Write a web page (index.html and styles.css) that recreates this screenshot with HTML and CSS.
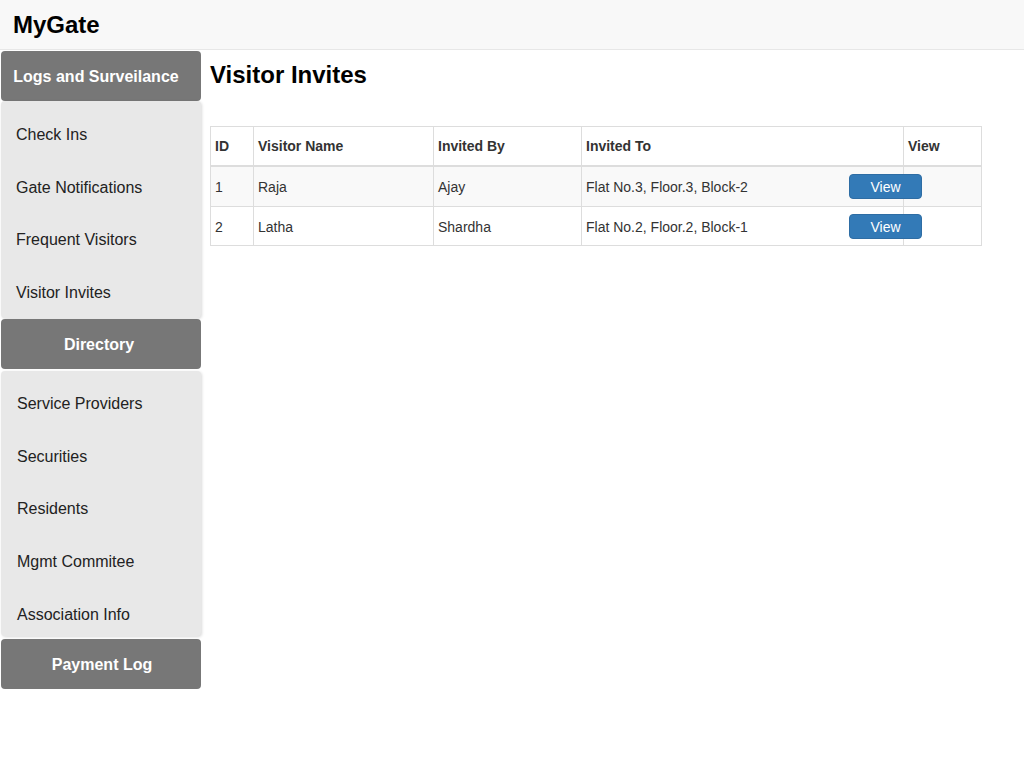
FILE: index.html
```html
<!DOCTYPE html>
<html>
<head>
<meta charset="utf-8">
<title>MyGate</title>
<link rel="stylesheet" href="styles.css">
</head>
<body>
<header class="topbar">
  <span class="brand">MyGate</span>
</header>
<div class="layout">
  <nav class="sidebar">
    <div class="menu-head menu-head-first">Logs and Surveilance</div>
    <ul class="menu-box menu-box-first">
      <li>Check Ins</li>
      <li>Gate Notifications</li>
      <li>Frequent Visitors</li>
      <li>Visitor Invites</li>
    </ul>
    <div class="menu-head">Directory</div>
    <ul class="menu-box menu-box-second">
      <li>Service Providers</li>
      <li>Securities</li>
      <li>Residents</li>
      <li>Mgmt Commitee</li>
      <li>Association Info</li>
    </ul>
    <div class="menu-head menu-head-last">Payment Log</div>
  </nav>
  <main class="content">
    <h1 class="title">Visitor Invites</h1>
    <table class="grid">
      <colgroup>
        <col class="c-id">
        <col class="c-name">
        <col class="c-by">
        <col class="c-to">
        <col class="c-view">
      </colgroup>
      <thead>
        <tr>
          <th>ID</th>
          <th>Visitor Name</th>
          <th>Invited By</th>
          <th>Invited To</th>
          <th>View</th>
        </tr>
      </thead>
      <tbody>
        <tr class="striped">
          <td>1</td>
          <td>Raja</td>
          <td>Ajay</td>
          <td><div class="to-cell"><span>Flat No.3, Floor.3, Block-2</span><button class="btn-view">View</button></div></td>
          <td></td>
        </tr>
        <tr>
          <td>2</td>
          <td>Latha</td>
          <td>Shardha</td>
          <td><div class="to-cell"><span>Flat No.2, Floor.2, Block-1</span><button class="btn-view">View</button></div></td>
          <td></td>
        </tr>
      </tbody>
    </table>
  </main>
</div>
</body>
</html>
```

FILE: styles.css
```css
* { box-sizing: border-box; }

body {
  margin: 0;
  font-family: "Liberation Sans", Arial, sans-serif;
  font-size: 14px;
  color: #333;
  background: #fff;
}

.topbar {
  height: 50px;
  background: #f8f8f8;
  border-bottom: 1px solid #e7e7e7;
  display: flex;
  align-items: center;
  padding-left: 13px;
}

.brand {
  font-size: 24px;
  font-weight: bold;
  color: #000;
  line-height: 28px;
  margin-top: 1px;
}

.layout {
  display: flex;
  gap: 9px;
  margin-top: 1px;
}

.sidebar {
  width: 200px;
  margin-left: 1px;
  display: flex;
  flex-direction: column;
}

.menu-head {
  height: 50px;
  background: #777;
  color: #fff;
  border-radius: 4px;
  font-size: 16px;
  font-weight: bold;
  display: flex;
  align-items: center;
  justify-content: center;
  padding-top: 2px;
  padding-right: 4px;
}

.menu-head-first {
  padding-right: 10px;
}

.menu-head-last {
  margin-top: 3px;
  padding-right: 0;
  padding-left: 2px;
}

.menu-box {
  list-style: none;
  margin: 0;
  padding: 7px 0 0;
  background: #e8e8e8;
  border-radius: 4px;
  box-shadow: 1px 1px 3px rgba(0, 0, 0, 0.15);
}

.menu-box li {
  height: 52.7px;
  padding-top: 2px;
  line-height: 50.7px;
  font-size: 16px;
  color: #222;
  padding-left: 15px;
}

.menu-box-first {
  margin-bottom: 1px;
  height: 217px;
}

.menu-box-second {
  margin-top: 2px;
  padding-top: 6px;
  padding-left: 1px;
  height: 265px;
}

.content {
  flex: 1;
}

.title {
  margin: 10px 0 0;
  font-size: 24px;
  line-height: 28px;
  font-weight: bold;
  color: #000;
}

.grid {
  margin-top: 37px;
  width: 772px;
  border-collapse: collapse;
  border: 1px solid #ddd;
  table-layout: fixed;
}

.c-id { width: 43px; }
.c-name { width: 180px; }
.c-by { width: 148px; }
.c-to { width: 322px; }
.c-view { width: 78px; }

.grid th {
  text-align: left;
  font-weight: bold;
  padding: 9px 4px 9px 4px;
  line-height: 20px;
  border: 1px solid #ddd;
  border-bottom: 2px solid #ddd;
  color: #333;
}

.grid td {
  padding: 7px 4px;
  line-height: 24px;
  border: 1px solid #ddd;
  vertical-align: middle;
}

.grid tbody tr:last-child td {
  padding-top: 7px;
  padding-bottom: 6px;
}

.grid tr.striped td {
  background: #f9f9f9;
}

.to-cell {
  display: flex;
  align-items: center;
  justify-content: space-between;
}

.btn-view {
  width: 73px;
  height: 25px;
  margin-right: -23px;
  padding: 0;
  background: #337ab7;
  border: 1px solid #2e6da4;
  border-radius: 4px;
  color: #fff;
  font-family: "Liberation Sans", Arial, sans-serif;
  font-size: 14px;
  line-height: 22px;
  position: relative;
}
```
